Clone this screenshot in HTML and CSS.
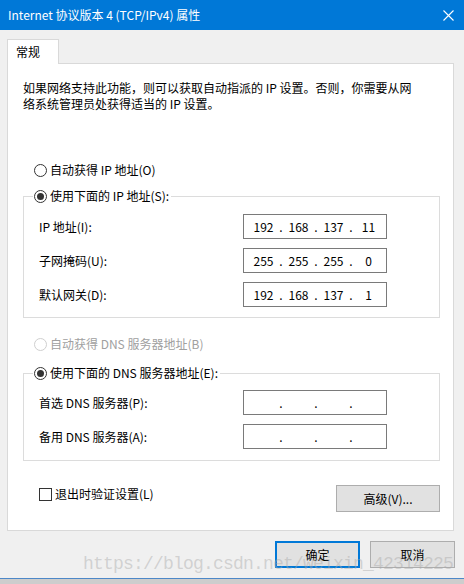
FILE: index.html
```html
<!DOCTYPE html>
<html lang="zh-CN">
<head>
    <meta charset="UTF-8">
    <meta name="viewport" content="width=device-width, initial-scale=1.0">
    <title>Internet 协议版本 4 (TCP/IPv4) 属性</title>
    <link rel="stylesheet" href="styles.css">
</head>
<body>
    <div class="window">
        <div class="titlebar">
            <span class="title">Internet 协议版本 4 (TCP/IPv4) 属性</span>
            <svg class="close" width="11" height="11" viewBox="0 0 11 11">
                <path d="M0.5 0.5 L10.5 10.5 M10.5 0.5 L0.5 10.5" stroke="#fff" stroke-width="1.1" fill="none"/>
            </svg>
        </div>

        <div class="dialog">
            <div class="tabs">
                <div class="tab">常规</div>
            </div>

            <div class="panel">
                <p class="desc">如果网络支持此功能，则可以获取自动指派的 IP 设置。否则，你需要从网<br>络系统管理员处获得适当的 IP 设置。</p>

                <div class="radio first"><span class="circle"></span>自动获得 IP 地址(O)</div>

                <fieldset class="group ip-group">
                    <legend><span class="radio checked"><span class="circle"></span>使用下面的 IP 地址(S):</span></legend>
                    <div class="fields">
                        <span class="label">IP 地址(I):</span>
                        <div class="ipbox"><span>192</span><i>.</i><span>168</span><i>.</i><span>137</span><i>.</i><span>11</span></div>
                        <span class="label">子网掩码(U):</span>
                        <div class="ipbox"><span>255</span><i>.</i><span>255</span><i>.</i><span>255</span><i>.</i><span>0</span></div>
                        <span class="label">默认网关(D):</span>
                        <div class="ipbox"><span>192</span><i>.</i><span>168</span><i>.</i><span>137</span><i>.</i><span>1</span></div>
                    </div>
                </fieldset>

                <div class="radio disabled dns-auto"><span class="circle"></span>自动获得 DNS 服务器地址(B)</div>

                <fieldset class="group dns-group">
                    <legend><span class="radio checked"><span class="circle"></span>使用下面的 DNS 服务器地址(E):</span></legend>
                    <div class="fields">
                        <span class="label">首选 DNS 服务器(P):</span>
                        <div class="ipbox"><span></span><i>.</i><span></span><i>.</i><span></span><i>.</i><span></span></div>
                        <span class="label">备用 DNS 服务器(A):</span>
                        <div class="ipbox"><span></span><i>.</i><span></span><i>.</i><span></span><i>.</i><span></span></div>
                    </div>
                </fieldset>

                <div class="panel-foot">
                    <div class="check"><span class="box"></span>退出时验证设置(L)</div>
                    <button class="btn advanced">高级(V)...</button>
                </div>
            </div>

            <div class="actions">
                <button class="btn default">确定</button>
                <button class="btn">取消</button>
            </div>
        </div>

        <div class="taskbar"></div>
        <div class="watermark">https://blog.csdn.net/weixin_42314225</div>
    </div>
</body>
</html>
```

FILE: styles.css
```css
* { box-sizing: border-box; }
body { margin: 0; font-family: "Noto Sans CJK SC", "Noto Sans", sans-serif; font-size: 12px; color: #000; }

.window {
    position: relative; width: 464px; height: 584px; background: #f0f0f0;
    display: flex; flex-direction: column; overflow: hidden;
}

.titlebar {
    height: 30px; background: #0078d7; color: #fff;
    display: flex; align-items: center; justify-content: space-between;
    padding: 0 10px 0 8px;
}
.title { font-size: 12px; line-height: 16px; }
.close { display: block; }

.dialog { padding: 9px 10px 0 7px; }

.tabs { display: flex; }
.tab {
    width: 52px; height: 25px; background: #fff; border: 1px solid #d9d9d9; border-bottom: none;
    padding: 4px 0 0 8px; line-height: 16px; margin-bottom: -1px; position: relative; z-index: 1;
}

.panel {
    height: 468px; background: #fff; border: 1px solid #d9d9d9;
    padding: 0 13px 0 15px;
}

.desc { margin: 16px 0 0; line-height: 16px; white-space: nowrap; }

.radio { display: flex; align-items: center; height: 16px; line-height: 16px; white-space: nowrap; }
.radio.first { margin-top: 50px; padding-left: 11px; }
.circle {
    width: 13px; height: 13px; border: 1px solid #333; border-radius: 50%; background: #fff;
    margin-right: 3px; display: flex; align-items: center; justify-content: center; flex: none;
}
.checked .circle::after { content: ""; width: 7px; height: 7px; border-radius: 50%; background: #333; }
.disabled { color: #a0a0a0; }
.disabled .circle { border-color: #cfcfcf; }
.dns-auto { margin-top: 18px; padding-left: 11px; }

.group { margin: 10px 0 0; padding: 0; border: 1px solid #dcdcdc; min-width: 0; }
.dns-group { margin-top: 13px; }
.group legend { margin-left: 9px; padding: 0 2px 0 1px; background: #fff; }

.fields {
    display: grid; grid-template-columns: 1fr 144px; row-gap: 9px; align-items: center;
    padding: 10px 52px 10px 15px;
}
.dns-group .fields { padding-top: 9px; padding-bottom: 11px; }
.label { line-height: 16px; }

.ipbox {
    height: 25px; border: 1px solid #7a7a7a; background: #fff;
    display: flex; align-items: center; padding-left: 5px; line-height: 16px;
}
.ipbox span { width: 29px; text-align: center; }
.ipbox i { width: 6px; text-align: center; font-style: normal; }

.panel-foot { display: flex; justify-content: space-between; align-items: flex-start; margin-top: 24px; }
.check { display: flex; align-items: center; height: 16px; line-height: 16px; padding-left: 16px; margin-top: 1px; }
.box { width: 13px; height: 13px; border: 1px solid #333; margin-right: 3px; background: #fff; }

.btn {
    font-family: inherit; font-size: 12px; color: #000; height: 27px; width: 85px;
    background: #e1e1e1; border: 1px solid #adadad; padding: 0; line-height: 16px;
}
.btn.advanced { width: 104px; }
.btn.default { border: 2px solid #0078d7; }

.actions { display: flex; justify-content: flex-end; gap: 10px; margin-top: 10px; margin-right: -1px; }

.taskbar { margin-top: auto; height: 6px; background: #cdcdcd; border-top: 1px solid #4d88c8; }

.watermark {
    position: absolute; left: 83px; top: 554px;
    font-family: "Liberation Mono", monospace; font-size: 18px; letter-spacing: -0.8px; line-height: 20px;
    color: rgba(170, 170, 170, 0.45); white-space: nowrap; pointer-events: none;
}
```
